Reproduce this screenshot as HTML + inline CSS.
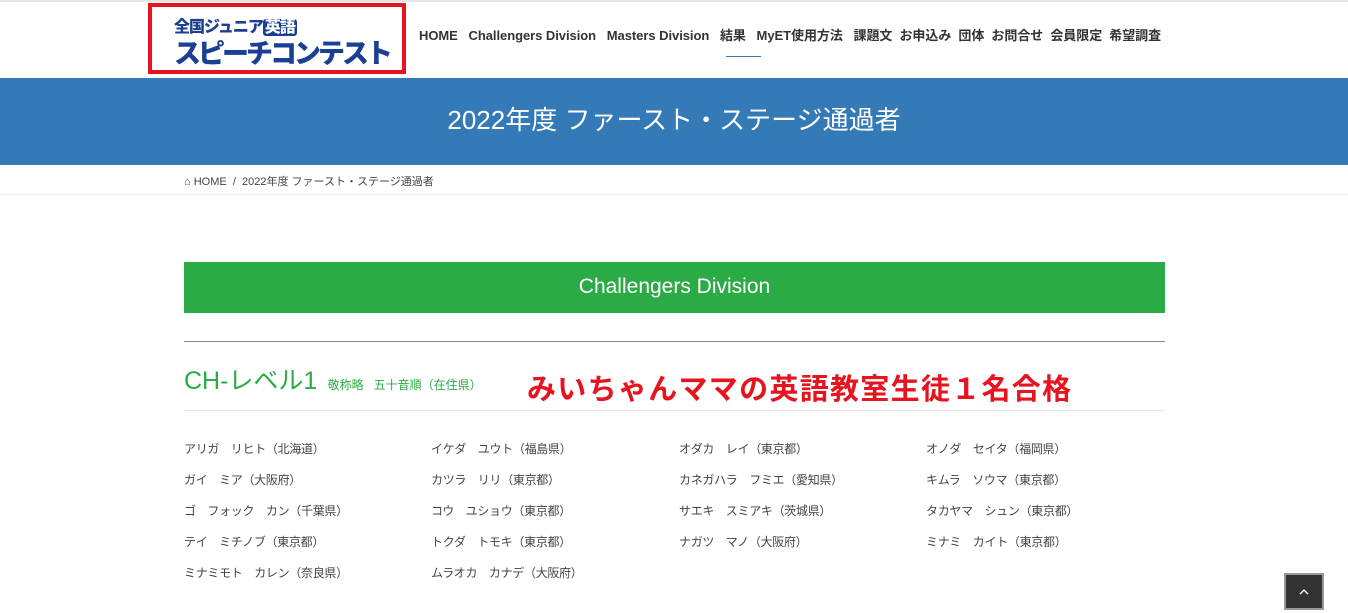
<!DOCTYPE html>
<html><head><meta charset="utf-8"><style>
*{margin:0;padding:0;box-sizing:border-box}
body{width:1348px;height:613px;overflow:hidden;background:#fff;font-family:"Liberation Sans","Noto Sans CJK JP",sans-serif;color:#333;position:relative}
.abs{position:absolute;white-space:nowrap}
.top{position:absolute;top:0;left:0;right:0;height:2px;background:#e5e5e5}
.logo{position:absolute;left:148px;top:3px;width:258px;height:71px;border:4px solid #e6141e;background:#fff;overflow:hidden}
.nav{top:25px;font-size:13px;font-weight:bold;color:#333;letter-spacing:-0.05px}
.band{position:absolute;top:78px;left:0;width:1348px;height:87px;background:#337ab7;color:#fff;font-size:26px;text-align:center;line-height:85px}
.bc{position:absolute;top:165px;left:0;width:1348px;height:30px;border-bottom:1px solid #eee;font-size:11px;color:#444}
.green{position:absolute;left:184px;top:262px;width:981px;height:51px;background:#2bab45;color:#fff;font-size:21px;text-align:center;line-height:50px}
.name{font-size:12px;color:#444;letter-spacing:-0.3px}
</style></head><body>
<div class="top"></div>
<div class="logo">
<div class="abs" style="left:22px;top:6px;font-size:16px;font-weight:900;color:#1a3f93;letter-spacing:-1px">全国ジュニア<span style="background:#1a3f93;color:#fff;padding:0 2px;border-radius:3px">英語</span></div>
<div class="abs" style="left:22px;top:25px;font-size:27px;font-weight:900;color:#1a3f93;letter-spacing:-3px">スピーチコンテスト</div>
</div>
<div class="abs nav" style="left:419px">HOME&nbsp;&nbsp; Challengers Division&nbsp;&nbsp; Masters Division&nbsp;&nbsp; 結果&nbsp;&nbsp; MyET使用方法&nbsp;&nbsp; 課題文&nbsp; お申込み&nbsp; 団体&nbsp; お問合せ&nbsp; 会員限定&nbsp; 希望調査</div>
<div class="abs" style="left:726px;top:56px;width:35px;height:1px;background:#337ab7"></div>
<div class="band">2022年度 ファースト・ステージ通過者</div>
<div class="bc"><div class="abs" style="left:184px;top:8px">&#8962; HOME&nbsp; /&nbsp; 2022年度 ファースト・ステージ通過者</div></div>
<div class="green">Challengers Division</div>
<div class="abs" style="left:184px;top:341px;width:981px;height:1px;background:#888"></div>
<div class="abs" style="left:184px;top:361px;font-size:25px;color:#2bab45">CH-レベル1 <span style="font-size:12px">&nbsp;敬称略 &nbsp;&nbsp;五十音順（在住県）</span></div>
<div class="abs" style="left:527px;top:366px;font-size:29px;font-weight:bold;color:#e6141e;letter-spacing:1.3px">みいちゃんママの英語教室生徒１名合格</div>
<div class="abs" style="left:184px;top:410px;width:981px;height:1px;background:#e8e8e8"></div>
<div class="abs name" style="left:184px;top:434px;line-height:31px">アリガ　リヒト（北海道）<br>ガイ　ミア（大阪府）<br>ゴ　フォック　カン（千葉県）<br>テイ　ミチノブ（東京都）<br>ミナミモト　カレン（奈良県）</div>
<div class="abs name" style="left:431px;top:434px;line-height:31px">イケダ　ユウト（福島県）<br>カツラ　リリ（東京都）<br>コウ　ユショウ（東京都）<br>トクダ　トモキ（東京都）<br>ムラオカ　カナデ（大阪府）</div>
<div class="abs name" style="left:679px;top:434px;line-height:31px">オダカ　レイ（東京都）<br>カネガハラ　フミエ（愛知県）<br>サエキ　スミアキ（茨城県）<br>ナガツ　マノ（大阪府）</div>
<div class="abs name" style="left:926px;top:434px;line-height:31px">オノダ　セイタ（福岡県）<br>キムラ　ソウマ（東京都）<br>タカヤマ　シュン（東京都）<br>ミナミ　カイト（東京都）</div>
<div class="abs" style="left:1284px;top:573px;width:40px;height:37px;background:#333;border:2px solid #999"><svg width="36" height="33" viewBox="0 0 36 33"><path d="M14 19 L18 15 L22 19" stroke="#fff" stroke-width="1.3" fill="none"/></svg></div>
</body></html>
